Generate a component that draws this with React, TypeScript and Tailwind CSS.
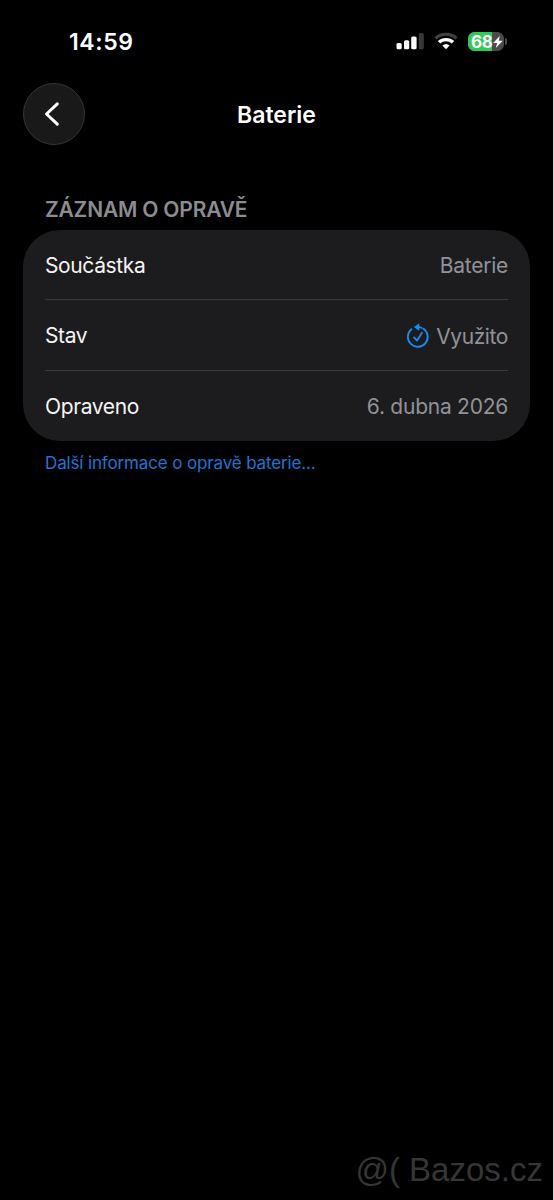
import type { ReactNode } from "react";

function SignalIcon() {
  return (
    <svg width="28" height="17" viewBox="0 0 28 17" fill="#fff">
      <rect x="0.5" y="10" width="5.2" height="6.2" rx="1.5" />
      <rect x="8" y="7.2" width="5.2" height="9" rx="1.5" />
      <rect x="15.2" y="3.4" width="5.4" height="12.8" rx="1.5" />
      <rect x="22.8" y="0" width="5" height="16.2" rx="1.5" fill="#38383a" />
    </svg>
  );
}

function WifiIcon() {
  return (
    <svg width="24" height="18" viewBox="0 0 24 18" fill="none">
      <path d="M1.6 6.3C7.2 0.9 16.8 0.9 22.4 6.3" stroke="#414143" strokeWidth="3.2" />
      <path d="M5 10.3C8.8 6.7 15.2 6.7 19 10.3" stroke="#fff" strokeWidth="3.4" />
      <path d="M8.4 13.5Q12 10.3 15.6 13.5L12 17.2Z" fill="#fff" />
    </svg>
  );
}

function BatteryIcon() {
  return (
    <div className="relative h-[19px] w-[39px]">
      <div className="flex h-[19px] w-[36px] overflow-hidden rounded-[6.5px] bg-[#4b4b4d]">
        <div className="h-full w-[24px] bg-[#34c759]" />
      </div>
      <div className="absolute top-[6px] right-0 h-[7px] w-[2px] rounded-r-full bg-[#4b4b4d]" />
      <span className="absolute top-0 left-[3px] text-[17px] leading-[20px] font-bold tracking-[-0.4px]">68</span>
      <svg className="absolute top-[4px] left-[25px]" width="10" height="12" viewBox="0 0 10 12" fill="#fff">
        <path d="M6.8 0L0.2 6.9H4.1L2.8 12L9.8 4.8H5.7Z" />
      </svg>
    </div>
  );
}

function UsedIcon() {
  return (
    <svg width="24" height="26" viewBox="0 0 24 26" fill="none" stroke="#1a8cf0" strokeWidth="1.8" strokeLinecap="round" strokeLinejoin="round">
      <path d="M17.2 5.6A9.9 9.9 0 1 1 5.4 6.3" />
      <path d="M9.4 4.1Q13 3.6 15.4 4.8" />
      <path d="M12.8 1.2V7L9 4.1Z" fill="#1a8cf0" strokeWidth="1.1" />
      <path d="M8 14.4L11 17.5L16 9.8" />
    </svg>
  );
}

function Row({ label, children }: { label: string; children: ReactNode }) {
  return (
    <div className="flex h-[71px] items-center justify-between border-t border-[#3a3a3c] pt-[2px] first:h-[69px] first:border-t-0 last:pt-px">
      <span className="text-[21px] tracking-[-0.38px] text-[#f5f5f5]">{label}</span>
      <span className="flex items-center gap-[6px] text-[21px] tracking-[-0.25px] text-[#929298]">{children}</span>
    </div>
  );
}

export default function App() {
  return (
    <div className="flex h-[1200px] w-[554px] flex-col overflow-hidden border-r border-[#d8d8d8] bg-black font-['Inter',sans-serif] text-white">
      <div className="flex h-[83px] justify-between pr-[46px] pl-[69px]">
        <span className="pt-[26px] text-[23px] leading-[32px] font-semibold tracking-[0.6px]">14:59</span>
        <div className="flex h-[83px] items-start pt-[32px]">
          <div className="mt-px"><SignalIcon /></div>
          <div className="ml-[10px]"><WifiIcon /></div>
          <div className="ml-[10px]"><BatteryIcon /></div>
        </div>
      </div>
      <header className="grid h-[62px] grid-cols-[62px_1fr_62px] items-center px-[23px]">
        <button aria-label="Zpět" className="flex size-[62px] items-center justify-center rounded-full border border-[#343436] bg-[#191919] pr-[5px]">
          <svg width="18" height="26" viewBox="0 0 18 26" fill="none" stroke="#fff" strokeWidth="3" strokeLinecap="round" strokeLinejoin="round">
            <path d="M14.3 2.8L3.5 13L14.3 23.2" />
          </svg>
        </button>
        <h1 className="pt-[2px] text-center text-[23px] leading-[30px] font-semibold">Baterie</h1>
      </header>
      <main className="px-[23px] pt-[49px]">
        <h2 className="h-[36px] pl-[22px] text-[21px] leading-[32px] font-semibold tracking-[-0.18px] text-[#8b8b90]">ZÁZNAM O OPRAVĚ</h2>
        <section className="h-[211px] rounded-[37px] bg-[#1c1c1e] px-[22px]">
          <Row label="Součástka">Baterie</Row>
          <Row label="Stav"><UsedIcon /><span className="pt-px tracking-[-0.4px]">Využito</span></Row>
          <Row label="Opraveno">6. dubna 2026</Row>
        </section>
        <a className="block pt-[10px] pl-[22px] text-[17px] leading-[24px] tracking-[-0.14px] text-[#1f74d2]">Další informace o opravě baterie...</a>
      </main>
      <footer className="mt-auto flex h-[51px] items-start justify-end pr-[10px] font-['Liberation_Sans',sans-serif] text-[33px] leading-[42px] text-[#363636]">@( Bazos.cz</footer>
    </div>
  );
}
